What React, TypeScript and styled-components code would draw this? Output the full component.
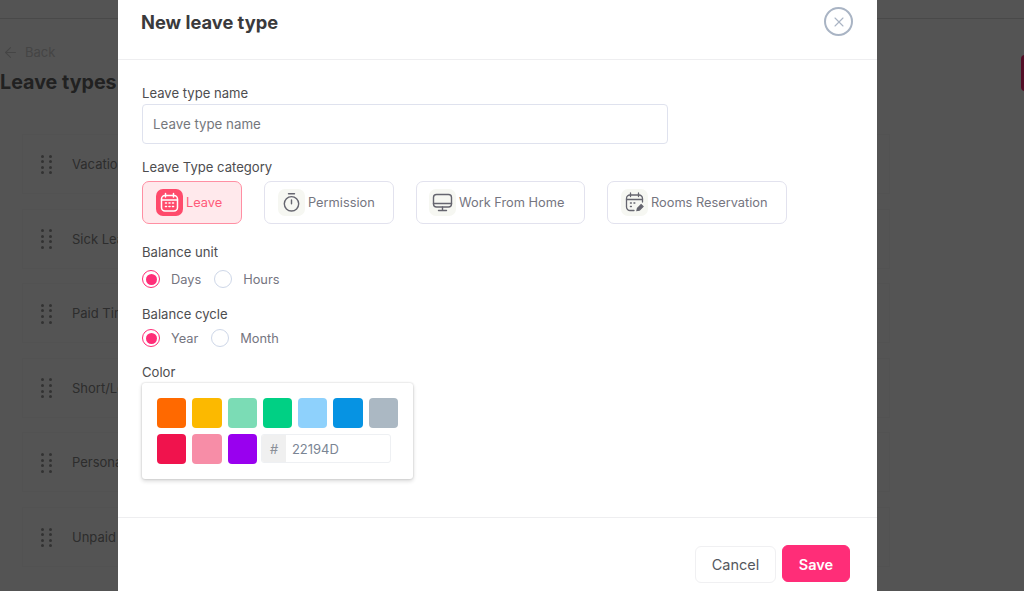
import React from "react";
import styled, { createGlobalStyle } from "styled-components";
import { ArrowLeft, X } from "lucide-react";

const GlobalStyle = createGlobalStyle`
  html, body {
    margin: 0;
    padding: 0;
    height: 100%;
    overflow: hidden;
    font-family: "Inter", "Liberation Sans", sans-serif;
  }
  * { box-sizing: border-box; }
`;

const Page = styled.div`
  position: relative;
  width: 1024px;
  height: 591px;
  overflow: hidden;
  background: #fff;
`;

const TopBar = styled.div`
  height: 19px;
  border-bottom: 1px solid #ddd;
`;

const Content = styled.div`
  padding: 24px 0 0 0;
`;

const BackLink = styled.div`
  display: flex;
  align-items: center;
  gap: 6px;
  height: 18px;
  padding-left: 2px;
  font-size: 13px;
  color: #d0d0d0;
`;

const PageTitle = styled.div`
  margin-top: 7px;
  font-size: 19.7px;
  line-height: 28px;
  font-weight: 700;
  color: #666;
`;

const PageAction = styled.div`
  position: absolute;
  top: 55px;
  right: -11px;
  width: 14px;
  height: 36px;
  border-radius: 4px;
  background: #ff2d78;
`;

const LeaveList = styled.div`
  margin-top: 38px;
  padding-left: 22px;
  display: flex;
  flex-direction: column;
  gap: 14.6px;
`;

const LeaveRow = styled.div`
  width: 868px;
  height: 60px;
  display: flex;
  align-items: center;
  gap: 20px;
  padding-left: 18px;
  font-size: 13px;
  color: #888;
  white-space: nowrap;
  border: 1px solid #f9f9f9;
`;

const Grip = styled.div`
  display: grid;
  grid-template-columns: 3px 3px;
  grid-auto-rows: 3px;
  gap: 2.6px 5px;
  margin-top: 1px;
  span {
    border-radius: 50%;
    background: #999;
  }
`;

const Overlay = styled.div`
  position: absolute;
  inset: 0;
  background: rgba(0, 0, 0, 0.67);
`;

const Modal = styled.div`
  position: absolute;
  left: 118px;
  top: -10px;
  width: 759px;
  height: 630px;
  background: #fff;
  color: #4a4a4a;
`;

const ModalHeader = styled.div`
  height: 70px;
  padding: 0 24px 6px 23px;
  display: flex;
  align-items: center;
  justify-content: space-between;
  border-bottom: 1px solid #eeeef0;
`;

const ModalTitle = styled.div`
  font-size: 18.3px;
  font-weight: 700;
  color: #3a3a3c;
`;

const CloseButton = styled.div`
  width: 29px;
  height: 29px;
  border-radius: 50%;
  border: 2px solid #a9b4c4;
  color: #a9b4c4;
  display: flex;
  align-items: center;
  justify-content: center;
`;

const ModalBody = styled.div`
  padding: 24px 24px 0 24px;
  height: 458px;
  border-bottom: 1px solid #eeeef0;
`;

const Label = styled.div<{ $top?: number }>`
  margin-top: ${({ $top }) => $top ?? 0}px;
  margin-bottom: -1px;
  padding-top: 1px;
  font-size: 13.1px;
  line-height: 17px;
  color: #4d4d4f;
`;

const TextInput = styled.div`
  width: 526px;
  height: 40px;
  margin-top: 3px;
  padding: 0 10px;
  display: flex;
  align-items: center;
  font-size: 13.3px;
  color: #75777c;
  border: 1px solid #dfe2ee;
  border-radius: 4px;
`;

const CategoryRow = styled.div`
  display: flex;
  gap: 22px;
  margin-top: 6px;
  margin-bottom: 19px;
`;

const CategoryCard = styled.div<{ $active?: boolean; $width: number; $pad: number }>`
  width: ${({ $width }) => $width}px;
  height: 43px;
  display: flex;
  align-items: center;
  gap: 3px;
  padding-left: ${({ $pad }) => $pad}px;
  font-size: 12.8px;
  border-radius: 7px;
  color: ${({ $active }) => ($active ? "#ff5a79" : "#75757f")};
  border: 1px solid ${({ $active }) => ($active ? "#ff8fa3" : "#e2e2ee")};
  background: ${({ $active }) => ($active ? "#ffe9ec" : "#fff")};
`;

const CategoryIcon = styled.div<{ $active?: boolean }>`
  width: 27px;
  height: 27px;
  flex: none;
  display: flex;
  align-items: center;
  justify-content: center;
  border-radius: 7px;
  color: ${({ $active }) => ($active ? "#fff" : "#65656f")};
  background: ${({ $active }) => ($active ? "#ff4a6b" : "#f6f7f2")};
`;

const RadioRow = styled.div<{ $top: number; $bottom: number }>`
  display: flex;
  align-items: center;
  height: 18px;
  margin-top: ${({ $top }) => $top}px;
  margin-bottom: ${({ $bottom }) => $bottom}px;
  font-size: 12.8px;
  color: #75757f;
`;

const RadioOption = styled.div`
  display: flex;
  align-items: center;
  gap: 11px;
  margin-right: 13px;
`;

const RadioCircle = styled.div<{ $checked?: boolean }>`
  width: 18px;
  height: 18px;
  border-radius: 50%;
  border: ${({ $checked }) => ($checked ? "1.5px solid #ff2d78" : "1.5px solid #ced7e8")};
  display: flex;
  align-items: center;
  justify-content: center;
  &::after {
    content: "";
    display: ${({ $checked }) => ($checked ? "block" : "none")};
    width: 11px;
    height: 11px;
    border-radius: 50%;
    background: #ff2d78;
  }
`;

const ColorPanel = styled.div`
  width: 271px;
  height: 96px;
  margin-top: 3px;
  padding: 15px 0 0 15px;
  border-radius: 3px;
  background: #fff;
  box-shadow: 0 0 2px rgba(0, 0, 0, 0.2), 0 2px 4px rgba(0, 0, 0, 0.16);
  display: flex;
  flex-direction: column;
  gap: 6px;
`;

const SwatchRow = styled.div`
  display: flex;
  gap: 6px;
`;

const Swatch = styled.div<{ $color: string }>`
  width: 29.3px;
  height: 30px;
  border-radius: 4px;
  background: ${({ $color }) => $color};
`;

const HexField = styled.div`
  display: flex;
  width: 130px;
  height: 29px;
  margin-left: -2px;
  border: 1px solid #eef0f3;
  border-radius: 3px;
  overflow: hidden;
`;

const HexPrefix = styled.div`
  width: 24px;
  flex: none;
  display: flex;
  align-items: center;
  justify-content: center;
  font-size: 13px;
  font-style: italic;
  color: #8a8f98;
  background: #f0f0f0;
`;

const HexValue = styled.div`
  padding-left: 6px;
  display: flex;
  align-items: center;
  font-size: 13px;
  color: #7a8594;
`;

const ModalFooter = styled.div`
  display: flex;
  justify-content: flex-end;
  gap: 6px;
  padding: 28px 27px 0 0;
`;

const FooterButton = styled.div<{ $primary?: boolean }>`
  height: 37px;
  margin-top: ${({ $primary }) => ($primary ? "-1px" : "0")};
  padding-top: ${({ $primary }) => ($primary ? "1px" : "0")};
  width: ${({ $primary }) => ($primary ? "68px" : "81px")};
  display: flex;
  align-items: center;
  justify-content: center;
  font-size: 14.5px;
  border-radius: 6px;
  font-weight: ${({ $primary }) => ($primary ? 600 : 400)};
  color: ${({ $primary }) => ($primary ? "#fff" : "#55585e")};
  background: ${({ $primary }) => ($primary ? "#ff2d78" : "#fff")};
  border: 1px solid ${({ $primary }) => ($primary ? "#ff2d78" : "#f0f0f2")};
`;

const CalendarIcon = () => (
  <svg width="21" height="21" viewBox="0 0 21 21" fill="none" stroke="currentColor" strokeWidth="1.5" strokeLinecap="round">
    <rect x="2.5" y="3.5" width="16" height="15.5" rx="3.5" />
    <path d="M2.5 8h16M6.5 1.5v3.5M14.5 1.5v3.5" />
    <path d="M6.5 11h1M10 11h1M13.5 11h1M6.5 14.5h1M10 14.5h1M13.5 14.5h1" strokeWidth="1.6" />
  </svg>
);

const StopwatchIcon = () => (
  <svg width="21" height="21" viewBox="0 0 21 21" fill="none" stroke="currentColor" strokeWidth="1.4" strokeLinecap="round">
    <circle cx="10.5" cy="11.8" r="7.2" />
    <path d="M7.5 1.8h6M10.5 11.8V8" />
  </svg>
);

const MonitorIcon = () => (
  <svg width="21" height="21" viewBox="0 0 21 21" fill="none" stroke="currentColor" strokeWidth="1.4" strokeLinecap="round">
    <rect x="1.5" y="2.5" width="18" height="12.5" rx="3" />
    <path d="M1.5 11.5h18M10.5 15v3.5M6.5 18.5h8" />
  </svg>
);

const CalendarEditIcon = () => (
  <svg width="21" height="21" viewBox="0 0 21 21" fill="none" stroke="currentColor" strokeWidth="1.3" strokeLinecap="round">
    <path d="M10 18.5H6a3.5 3.5 0 0 1-3.5-3.5V6.5A3.5 3.5 0 0 1 6 3h9a3.5 3.5 0 0 1 3.5 3.5V10" />
    <path d="M2.5 7.5h16M6.5 1v3.5M14.5 1v3.5" />
    <path d="M6.5 11h.8M10 11h.8M6.5 14.5h.8" strokeWidth="1.5" />
    <path d="M13 18.5l.5-2.3 3.6-3.6 1.9 1.9-3.6 3.6z" fill="currentColor" />
  </svg>
);

const leaveTypes = ["Vacation", "Sick Leave", "Paid Time Off", "Short/Long", "Personal", "Unpaid"];

const categories = [
  { label: "Leave", width: 100, pad: 13, active: true, icon: <CalendarIcon /> },
  { label: "Permission", width: 130, pad: 13, icon: <StopwatchIcon /> },
  { label: "Work From Home", width: 169, pad: 12, icon: <MonitorIcon /> },
  { label: "Rooms Reservation", width: 180, pad: 13, icon: <CalendarEditIcon /> },
];

const topColors = ["#ff6900", "#fcb900", "#7bdcb5", "#00d084", "#8ed1fc", "#0693e3", "#abb8c3"];
const bottomColors = ["#f0134d", "#f78da7", "#9900ef"];

export default function App() {
  return (
    <Page>
      <GlobalStyle />
      <TopBar />
      <Content>
        <BackLink>
          <ArrowLeft size={17} strokeWidth={1.5} />
          Back
        </BackLink>
        <PageTitle>Leave types</PageTitle>
        <PageAction />
        <LeaveList>
          {leaveTypes.map((name) => (
            <LeaveRow key={name}>
              <Grip>
                {Array.from({ length: 8 }).map((_, i) => (
                  <span key={i} />
                ))}
              </Grip>
              {name}
            </LeaveRow>
          ))}
        </LeaveList>
      </Content>
      <Overlay />
      <Modal>
        <ModalHeader>
          <ModalTitle>New leave type</ModalTitle>
          <CloseButton>
            <X size={16} strokeWidth={1.6} />
          </CloseButton>
        </ModalHeader>
        <ModalBody>
          <Label>Leave type name</Label>
          <TextInput>Leave type name</TextInput>
          <Label $top={14}>Leave Type category</Label>
          <CategoryRow>
            {categories.map((c) => (
              <CategoryCard key={c.label} $active={c.active} $width={c.width} $pad={c.pad}>
                <CategoryIcon $active={c.active}>{c.icon}</CategoryIcon>
                {c.label}
              </CategoryCard>
            ))}
          </CategoryRow>
          <Label>Balance unit</Label>
          <RadioRow $top={10} $bottom={17}>
            <RadioOption>
              <RadioCircle $checked />
              Days
            </RadioOption>
            <RadioOption>
              <RadioCircle />
              Hours
            </RadioOption>
          </RadioRow>
          <Label>Balance cycle</Label>
          <RadioRow $top={7} $bottom={16}>
            <RadioOption>
              <RadioCircle $checked />
              Year
            </RadioOption>
            <RadioOption>
              <RadioCircle />
              Month
            </RadioOption>
          </RadioRow>
          <Label>Color</Label>
          <ColorPanel>
            <SwatchRow>
              {topColors.map((c) => (
                <Swatch key={c} $color={c} />
              ))}
            </SwatchRow>
            <SwatchRow>
              {bottomColors.map((c) => (
                <Swatch key={c} $color={c} />
              ))}
              <HexField>
                <HexPrefix>#</HexPrefix>
                <HexValue>22194D</HexValue>
              </HexField>
            </SwatchRow>
          </ColorPanel>
        </ModalBody>
        <ModalFooter>
          <FooterButton>Cancel</FooterButton>
          <FooterButton $primary>Save</FooterButton>
        </ModalFooter>
      </Modal>
    </Page>
  );
}
